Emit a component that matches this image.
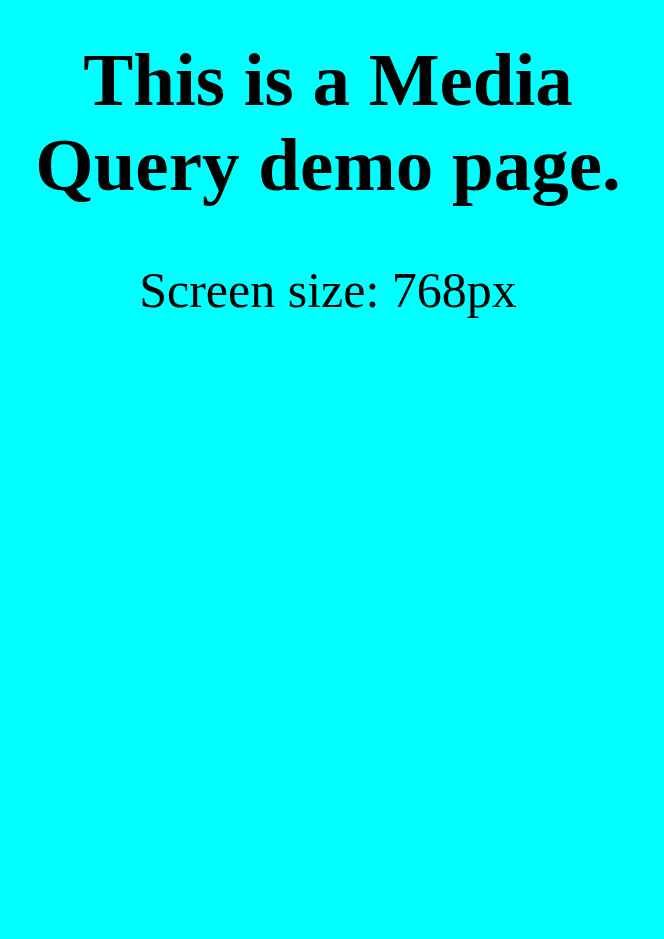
import React from "react";

// Media query demo page: cyan background at this breakpoint.
function App() {
  return (
    <div className="min-h-screen w-full bg-[#00ffff] text-black font-['Liberation_Serif','Times_New_Roman',serif]">
      <div className="w-[656px] text-center">
        <h1 className="pt-[37px] text-[75px] font-bold leading-[85px]">
          This is a Media Query demo page.
        </h1>
        <p className="mt-[55px] text-[50px] leading-[57px]">Screen size: 768px</p>
      </div>
    </div>
  );
}

export default App;
